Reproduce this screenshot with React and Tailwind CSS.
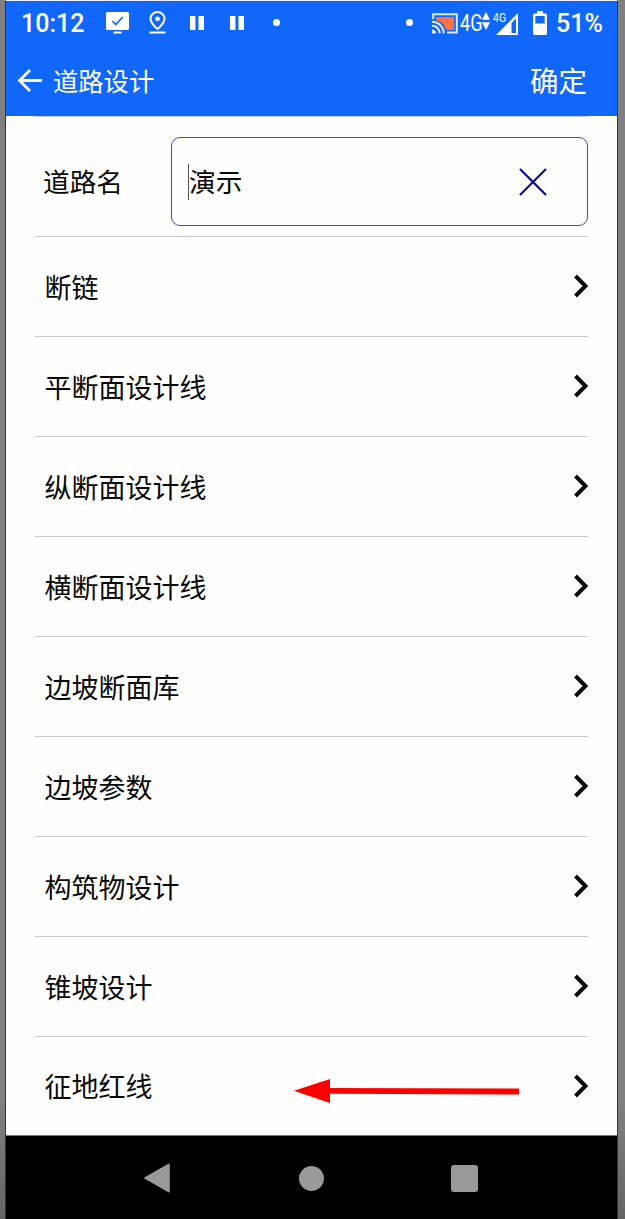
import React from 'react';

const MENU_ITEMS = [
  '断链',
  '平断面设计线',
  '纵断面设计线',
  '横断面设计线',
  '边坡断面库',
  '边坡参数',
  '构筑物设计',
  '锥坡设计',
  '征地红线',
];

const PauseIcon = ({ className }) => (
  <svg className={className} width="14" height="14" viewBox="0 0 14 14" fill="currentColor">
    <path d="M0 0h5.400v14H0zM8.500 0H14v14H8.500z" />
  </svg>
);

const StatusBar = () => (
  <div className="flex h-[43px] items-center pl-[15px] font-['Roboto',sans-serif] text-white">
    <span className="w-[66px] pt-0.5 whitespace-nowrap text-[25px] font-medium leading-none">10:12</span>
    <svg className="ml-[19px] shrink-0" width="23" height="22" viewBox="0 0 23 22">
      <path fill="currentColor" d="M1.500 0h20Q23 0 23 1.500v15Q23 18 21.500 18h-20Q0 18 0 16.500v-15Q0 0 1.500 0zM8 19.500h7l1 2H7z" />
      <path fill="none" stroke="#1267fb" strokeWidth="1.700" d="M6.300 9l3.500 3.500 7-7.500" />
    </svg>
    <svg className="ml-5 shrink-0" width="17" height="23" viewBox="0 0 17 23">
      <path fill="none" stroke="currentColor" strokeWidth="2" d="M8.500 18C4.500 14.500 1.500 11 1.500 7.700a7 6.700 0 0 1 14 0C15.500 11 12.500 14.500 8.500 18z" />
      <circle cx="8.500" cy="7.800" r="2.400" fill="currentColor" />
      <path fill="currentColor" d="M.5 20.500h16v2H.5z" />
    </svg>
    <PauseIcon className="ml-6 shrink-0" />
    <PauseIcon className="ml-[26px] shrink-0" />
    <span className="ml-[29px] size-[7px] shrink-0 rounded-full bg-white" />
    <span className="ml-[126px] size-[7px] shrink-0 rounded-full bg-white" />
    <svg className="ml-[19px] mt-0.5 shrink-0" width="26" height="21" viewBox="0 0 26 21">
      <path fill="#ff7043" d="M4 4h18v13h-8Q12 9 4 7z" />
      <path fill="none" stroke="#dfeaff" strokeWidth="2" d="M1.200 6V1.200h23.600v18.300H15" />
      <path fill="none" stroke="#dfeaff" strokeWidth="2" d="M0 8.800A11.500 11.500 0 0 1 11.700 20.300M0 12.800A7.500 7.500 0 0 1 7.700 20.300" />
      <path fill="#dfeaff" d="M0 16.500A4 4 0 0 1 4 20.500H0z" />
    </svg>
    <span className="ml-0.5 w-[22px] origin-left scale-x-[0.79] pt-0.5 whitespace-nowrap text-[23px] leading-none">4G</span>
    <svg className="mb-1 shrink-0" width="8" height="18" viewBox="0 0 8 18" fill="currentColor">
      <path d="M4 0l4 7.700H0zM4 18l4-7.700H0z" />
    </svg>
    <div className="relative ml-[3px] mt-0.5 h-[22px] w-6 shrink-0">
      <span className="absolute -top-0.5 left-0 origin-left scale-x-[0.84] text-[12.500px] leading-[14px]">4G</span>
      <svg className="absolute bottom-0 left-0" width="25" height="22" viewBox="0 0 25 22">
        <path fill="currentColor" fillRule="evenodd" d="M25 0v22H3zM23 5.500l-4.500 4.500v10H23z" />
      </svg>
    </div>
    <svg className="ml-[16px] shrink-0" width="14" height="24" viewBox="0 0 14 24">
      <path fill="currentColor" fillRule="evenodd" d="M4 0h6v2.500h2.500Q14 2.500 14 4v18Q14 24 12.500 24h-11Q0 24 0 22V4Q0 2.500 1.500 2.500H4zM2.300 5v7.500h9.400V5z" />
    </svg>
    <span className="ml-[9px] pt-0.5 whitespace-nowrap text-[25px] font-medium leading-none">51%</span>
  </div>
);

const TitleBar = () => (
  <div className="flex h-[72px] items-center pr-[30px] pt-px pl-[11px] text-white">
    <svg width="25" height="23" viewBox="0 0 25 23" fill="none" stroke="currentColor" strokeWidth="2.800">
      <path d="M25 11.500H2.500M13 1L2.500 11.500 13 22" />
    </svg>
    <h1 className="ml-[11px] text-[25.300px] leading-none">道路设计</h1>
    <button className="ml-auto text-[28.500px] leading-none">确定</button>
  </div>
);

const NameField = () => (
  <div className="flex h-[120px] items-center border-b border-[#c6cacd] pl-2">
    <label className="mt-2.5 w-[128px] text-[26.700px] leading-none">道路名</label>
    <div className="mt-2.5 flex h-[89px] flex-1 items-center rounded-[9px] border border-[#454aa5] pr-10 pl-4">
      <span className="h-9 w-px bg-[#555]" />
      <span className="text-[26.700px] leading-none">演示</span>
      <svg className="ml-auto" width="28" height="28" viewBox="0 0 28 28" stroke="#0b0b97" strokeWidth="2.200">
        <path d="M1 1l26 26M27 1L1 27" />
      </svg>
    </div>
  </div>
);

const MenuRow = ({ label, marked }) => (
  <li className="relative flex h-[100px] items-center justify-between border-b border-[#c6cacd] pl-[9.500px] last:h-[98px] last:border-b-0">
    <span className="pb-px text-[27px] leading-none">{label}</span>
    <svg className="mb-px" width="15" height="24" viewBox="0 0 15 24" fill="none" stroke="#080808" strokeWidth="4">
      <path d="M2.500 2L12.500 12 2.500 22" />
    </svg>
    {marked && (
      <svg className="absolute top-[42px] left-[259px]" width="225" height="24" viewBox="0 0 225 24" fill="#f00">
        <path d="M0 11.700L36 0v9l189 .5v6L36 14.700V24z" />
      </svg>
    )}
  </li>
);

const NavBar = () => (
  <div className="flex h-[84px] items-center border-t border-[#777] bg-black pt-px pl-[138px] text-[#999997]">
    <svg width="26" height="30" viewBox="0 0 26 30" fill="currentColor" stroke="currentColor" strokeWidth="2" strokeLinejoin="round">
      <path d="M1.200 15L24.800 1.500v27z" />
    </svg>
    <span className="ml-[129px] size-[25px] rounded-full bg-[#999997]" />
    <span className="ml-[127px] size-[27px] rounded-[3px] bg-[#999997]" />
  </div>
);

const App = () => {
  return (
    <div className="h-[1219px] w-[625px] bg-[linear-gradient(#808080_0,#808080_1100px,#656565_1219px)] pl-[5px] font-['Noto_Sans_CJK_SC',sans-serif] text-[#080808]">
      <div className="h-full w-[613px] border-x border-t border-x-[#333] border-t-[#e8eef8] bg-[#fefefc]">
        <header className="bg-[#1267fb]">
          <StatusBar />
          <TitleBar />
        </header>
        <main className="mr-[29px] ml-[29px] border-t border-[#c6cacd]">
          <NameField />
          <ul>
            {MENU_ITEMS.map((label, i) => (
              <MenuRow key={label} label={label} marked={i === MENU_ITEMS.length - 1} />
            ))}
          </ul>
        </main>
        <NavBar />
      </div>
    </div>
  );
};

export default App;
